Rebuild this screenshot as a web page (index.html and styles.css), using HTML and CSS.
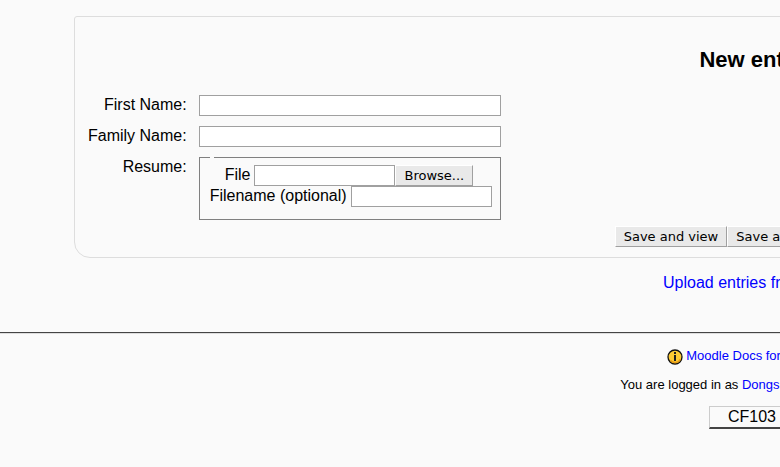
FILE: index.html
```html
<!DOCTYPE html>
<html lang="en">
<head>
    <meta charset="UTF-8">
    <meta name="viewport" content="width=device-width, initial-scale=1.0">
    <title>New entry</title>
    <link rel="stylesheet" href="styles.css">
</head>
<body>
    <form class="entry-box">
        <h2>New entry</h2>
        <div class="fields">
            <label for="first-name">First Name:</label>
            <input type="text" id="first-name" class="wide">

            <label for="family-name">Family Name:</label>
            <input type="text" id="family-name" class="wide">

            <span class="field-name">Resume:</span>
            <fieldset aria-label="Resume">
                <legend></legend>
                <div class="file-row">
                    <label for="file">File</label>
                    <input type="text" id="file">
                    <button type="button">Browse...</button>
                </div>
                <div class="name-row">
                    <label for="filename">Filename (optional)</label>
                    <input type="text" id="filename">
                </div>
            </fieldset>
        </div>
        <div class="actions">
            <button type="submit">Save and view</button>
            <button type="submit">Save and add another</button>
        </div>
    </form>

    <p class="upload"><a href="#">Upload entries from a file</a></p>

    <hr>

    <footer>
        <p class="docs">
            <a href="#">
                <svg width="16" height="16" viewBox="0 0 16 16" aria-hidden="true">
                    <circle cx="8" cy="8" r="7" fill="#fc3" stroke="#111" stroke-width="1.3"/>
                    <path d="M3.5 11.5A6 6 0 0 0 13.5 10" fill="none" stroke="#e69b12" stroke-width="1.5"/>
                    <rect x="7" y="3" width="2" height="2" fill="#222"/>
                    <path d="M7 6h2v6H7z" fill="#222"/>
                </svg>
                Moodle Docs for this page
            </a>
        </p>
        <p class="login-info">You are logged in as <a href="#">Dongsheng Cai</a> (<a href="#">Logout</a>)</p>
        <a class="home-link" href="#">CF103</a>
    </footer>
</body>
</html>
```
FILE: styles.css
```css
html {
    overflow: hidden;
}

body {
    font-family: "Liberation Sans", Arial, sans-serif;
    font-size: 16px;
    line-height: 20px;
    color: #000;
    background-color: #fafafa;
    margin: 0;
    min-width: 1504px;
}

a {
    color: #00f;
    text-decoration: none;
}

.entry-box {
    margin: 16px 74px 0;
    padding: 28px 13px 10px;
    border: 1px solid #ddd;
    border-radius: 3px 3px 16px 16px;
}

h2 {
    font-size: 22px;
    line-height: 30px;
    margin: 0 0 20px;
    text-align: center;
}

.fields {
    display: grid;
    grid-template-columns: max-content 302px;
    column-gap: 12px;
    row-gap: 10px;
    text-align: right;
}

input {
    box-sizing: border-box;
    width: 141px;
    height: 21px;
    padding: 1px 3px;
    border: 1px solid #a0a0a0;
    background-color: #fff;
    font-size: 13px;
}

.wide {
    width: 100%;
}

fieldset {
    min-width: 0;
    margin: 0;
    padding: 7px 10px 12px;
    border: 1px solid #808080;
    text-align: left;
    white-space: nowrap;
}

legend {
    padding: 0 2px;
}

.file-row, .name-row {
    display: flex;
}

.file-row {
    margin-left: 15px;
}

.file-row label, .name-row label {
    margin-right: 4px;
}

button {
    box-sizing: border-box;
    height: 21px;
    padding: 0 8px;
    border: 1px solid #fff;
    border-right-color: #a0a0a0;
    border-bottom-color: #a0a0a0;
    background-color: #e9e9e9;
    color: #000;
    font-family: "DejaVu Sans", Verdana, sans-serif;
    font-size: 13px;
}

.actions {
    display: flex;
    justify-content: center;
    margin-top: 6px;
}

.upload {
    margin: 15px 0 39px;
    text-align: center;
}

hr {
    margin: 0;
    border: 0;
    border-top: 1px solid #444;
    border-bottom: 1px solid #ddd;
}

footer {
    padding-top: 12px;
    text-align: center;
}

footer p {
    font-size: 13px;
    margin: 0 0 9px;
}

.docs svg {
    vertical-align: middle;
}

.home-link {
    display: inline-block;
    margin-top: 2px;
    padding: 0 18px;
    border: 1px solid #ccc;
    border-bottom: 2px solid #444;
    color: #000;
}
```
